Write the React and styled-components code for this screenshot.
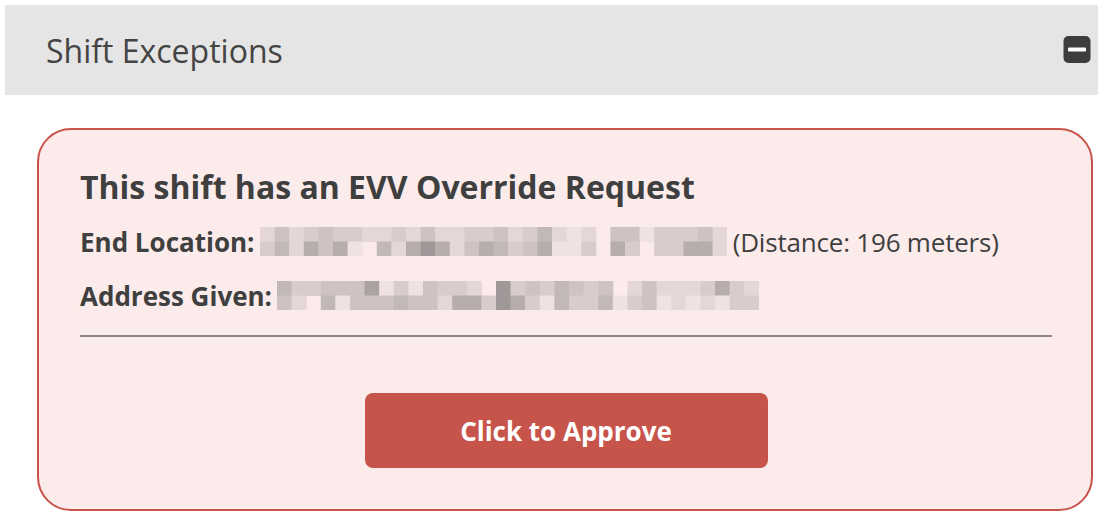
import React from 'react'
import styled, { createGlobalStyle } from 'styled-components';

const GlobalStyle = createGlobalStyle`
  body {
    margin: 0;
    background: #fff;
    font-family: "Open Sans", "Noto Sans", sans-serif;
    color: #3f3f3f;
  }
`;

const Page = styled.div`
  padding: 5px 11px 10px 5px;
`;

const Header = styled.div`
  display: flex;
  align-items: center;
  justify-content: space-between;
  height: 90px;
  padding: 0 7px 0 41px;
  background: #e5e5e5;
`;

const HeaderTitle = styled.h2`
  margin: 0;
  font-size: 32px;
  font-weight: 400;
  color: #444;
`;

const Card = styled.div`
  margin: 33px 5px 0 32px;
  padding: 38px 39px 41px 41px;
  border: 2px solid #c9534a;
  border-radius: 34px;
  background: #fbeceb;
`;

const CardTitle = styled.h3`
  margin: 0 0 21px;
  font-size: 32px;
  line-height: 38px;
  font-weight: 700;
  color: #3f3f3f;
`;

const Field = styled.div`
  display: flex;
  align-items: center;
  gap: 5px;
  font-size: 26px;
  line-height: 30px;
  margin-bottom: 24px;
`;

const Label = styled.span`
  font-weight: 700;
`;

const Muted = styled.span`
  font-weight: 400;
  margin-left: 1px;
  letter-spacing: -0.2px;
`;

const Divider = styled.hr`
  margin: 0;
  border: 0;
  border-top: 2px solid #8e8888;
`;

const Actions = styled.div`
  display: flex;
  justify-content: center;
  padding-top: 56px;
`;

const ApproveButton = styled.button`
  width: 403px;
  height: 75px;
  border: 0;
  border-radius: 8px;
  background: #c6544a;
  color: #fff;
  font-family: inherit;
  font-size: 26px;
  font-weight: 700;
  cursor: pointer;
`;

const Mosaic = styled.svg`
  display: block;
  margin-top: -2px;
`;

// pixelated redaction: each digit is a shade from 0 (none) to 8 (darkest)
const endRows = [
  [2,4,2,3,4,3,3,2,2,3,2,4,2,2,3,3,4,2,3,5,2,1,2,0,4,4,1,3,3,3,4,2],
  [3,5,2,6,4,6,1,0,5,2,6,8,6,2,4,6,5,3,4,6,1,1,3,0,6,3,0,3,3,6,6,2],
];

const addressRows = [
  [5,3,3,4,4,4,7,1,3,1,4,3,3,2,0,8,3,4,3,5,4,3,4,0,2,4,2,2,2,3,6,3,2],
  [4,2,0,5,1,4,4,4,5,4,4,2,6,6,3,8,6,3,1,5,3,3,5,1,3,4,1,2,1,2,1,3,3],
];

function shade(level) {
  const bg = [251, 236, 235];
  const dark = [160, 152, 152];
  const t = level / 8;
  const c = bg.map((v, i) => Math.round(v + (dark[i] - v) * t));
  return `rgb(${c[0]},${c[1]},${c[2]})`;
}

const Redacted = ({ rows, cell = 14.6, height = 14.5 }) => {
  const cols = rows[0].length;
  return (
    <Mosaic width={cols * cell} height={rows.length * height}>
      {rows.map((row, r) =>
        row.map((level, c) =>
          level === 0 ? null : (
            <rect
              key={`${r}-${c}`}
              x={c * cell}
              y={r * height}
              width={cell + 0.5}
              height={height + 0.5}
              fill={shade(level)}
            />
          )
        )
      )}
    </Mosaic>
  );
};

const MinusIcon = () => (
  <svg width="28" height="28" viewBox="0 0 28 28">
    <rect x="0.5" y="0" width="27" height="27" rx="5" fill="#3d3d3d" />
    <rect x="5" y="11.5" width="18" height="4" rx="1" fill="#fff" />
  </svg>
);

export default function App() {
  return (
    <Page>
      <GlobalStyle />
      <Header>
        <HeaderTitle>Shift Exceptions</HeaderTitle>
        <MinusIcon />
      </Header>
      <Card>
        <CardTitle>This shift has an EVV Override Request</CardTitle>
        <Field>
          <Label>End Location:</Label>
          <Redacted rows={endRows} />
          <Muted>(Distance: 196 meters)</Muted>
        </Field>
        <Field>
          <Label>Address Given:</Label>
          <Redacted rows={addressRows} />
        </Field>
        <Divider />
        <Actions>
          <ApproveButton>Click to Approve</ApproveButton>
        </Actions>
      </Card>
    </Page>
  );
}
